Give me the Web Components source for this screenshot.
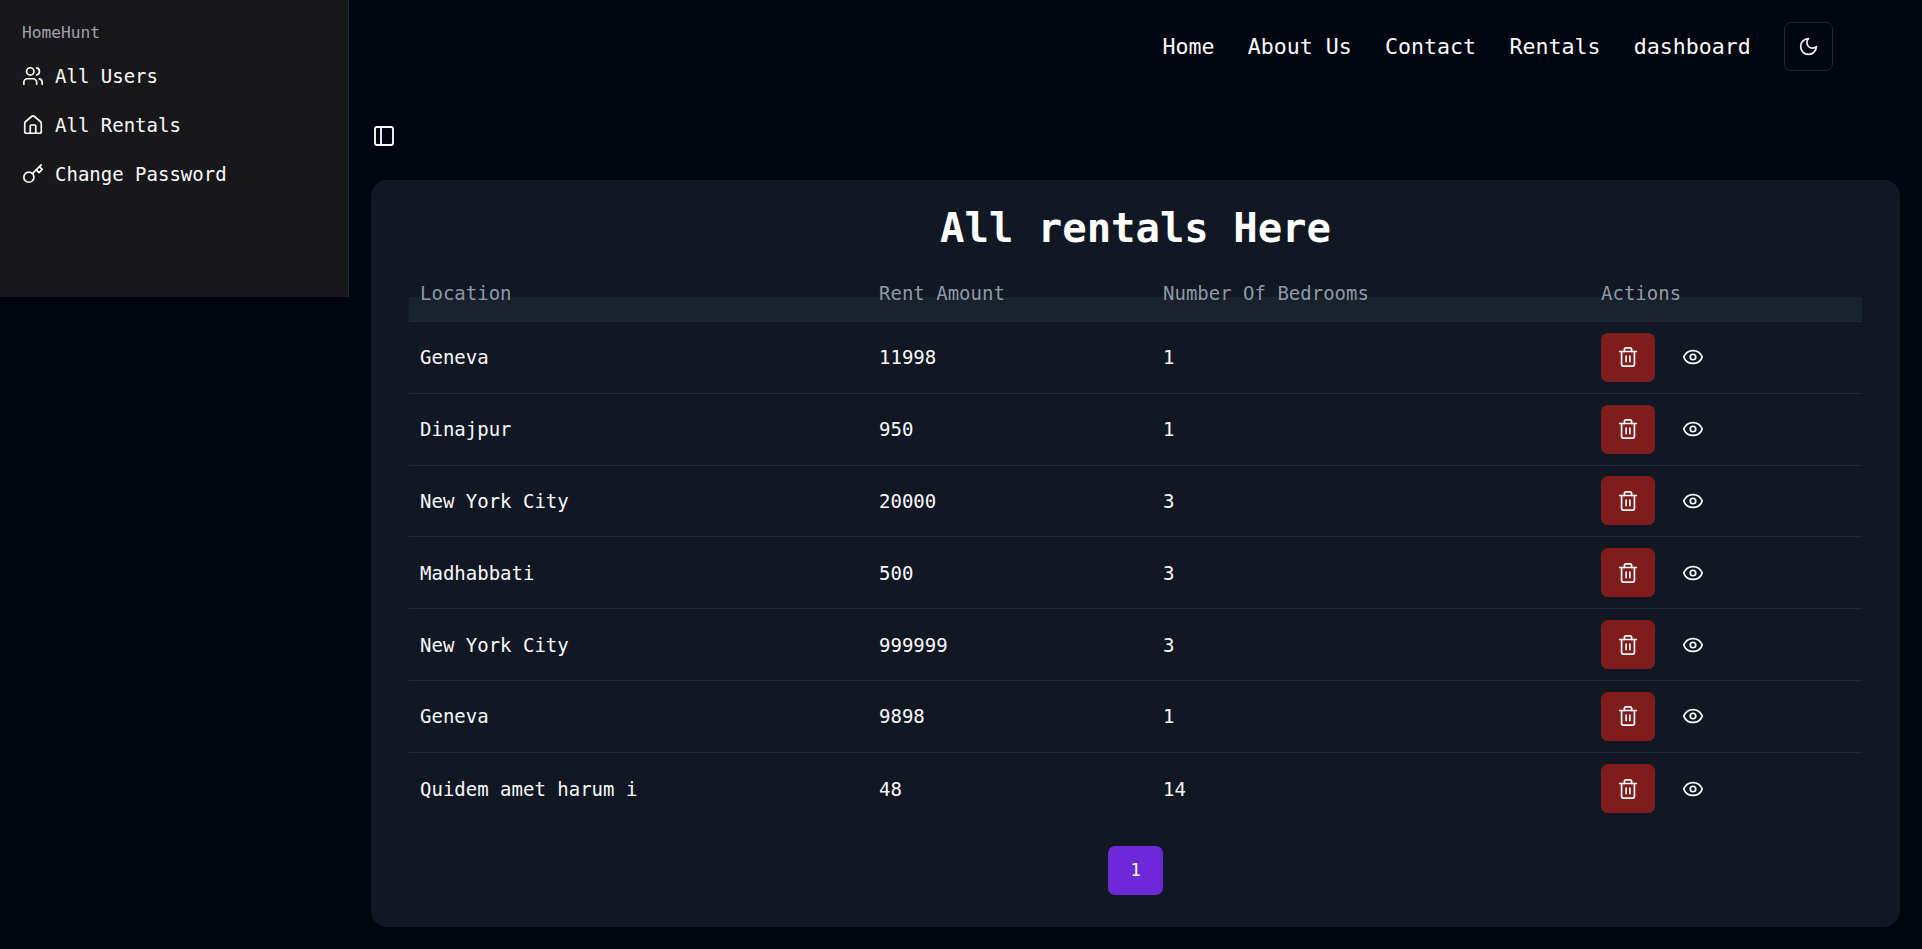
<!DOCTYPE html>
<html>
<head>
<meta charset="utf-8">
<title>HomeHunt</title>
<style>
    html, body { margin: 0; height: 100%; background: #01050f; overflow: hidden; }
    body { font-family: "DejaVu Sans Mono", monospace; color: #f9fafb; }
</style>
</head>
<body>
<app-shell>
    <side-bar slot="side"></side-bar>
    <top-nav slot="nav"></top-nav>
    <rentals-card slot="main"></rentals-card>
</app-shell>

<script>
const icons = {
    users: '<path d="M16 21v-2a4 4 0 0 0-4-4H6a4 4 0 0 0-4 4v2"/><circle cx="9" cy="7" r="4"/><path d="M22 21v-2a4 4 0 0 0-3-3.87"/><path d="M16 3.13a4 4 0 0 1 0 7.75"/>',
    home: '<path d="M15 21v-8a1 1 0 0 0-1-1h-4a1 1 0 0 0-1 1v8"/><path d="M3 10a2 2 0 0 1 .709-1.528l7-5.999a2 2 0 0 1 2.582 0l7 5.999A2 2 0 0 1 21 10v9a2 2 0 0 1-2 2H5a2 2 0 0 1-2-2z"/>',
    key: '<circle cx="7.5" cy="15.5" r="5.5"/><path d="m21 2-9.6 9.6"/><path d="m15.5 7.5 3 3L22 7l-3-3"/>',
    panel: '<rect width="18" height="18" x="3" y="3" rx="2"/><path d="M9 3v18"/>',
    moon: '<path d="M12 3a6 6 0 0 0 9 9 9 9 0 1 1-9-9Z"/>',
    trash: '<path d="M3 6h18"/><path d="M19 6v14a2 2 0 0 1-2 2H7a2 2 0 0 1-2-2V6"/><path d="M8 6V4a2 2 0 0 1 2-2h4a2 2 0 0 1 2 2v2"/><path d="M10 11v6"/><path d="M14 11v6"/>',
    eye: '<path d="M2.062 12.348a1 1 0 0 1 0-.696 10.75 10.75 0 0 1 19.876 0 1 1 0 0 1 0 .696 10.75 10.75 0 0 1-19.876 0"/><circle cx="12" cy="12" r="3"/>'
};

function icon(name, size) {
    return `<svg width="${size}" height="${size}" viewBox="0 0 24 24" fill="none" stroke="currentColor" stroke-width="1.85" stroke-linecap="round" stroke-linejoin="round">${icons[name]}</svg>`;
}

class AppShell extends HTMLElement {
    constructor() {
        super();
        this.shadowDOM = this.attachShadow({mode: "open"});
        this.shadowDOM.innerHTML = `
        <style>
            :host {
                display: grid;
                grid-template-columns: 349px 1fr;
                height: 949px;
                align-items: start;
            }
            .content {
                display: flex;
                flex-direction: column;
                padding: 0 22px 0 22px;
            }
        </style>
        <slot name="side"></slot>
        <div class="content">
            <slot name="nav"></slot>
            <slot name="main"></slot>
        </div>
        `;
    }
}

class SideBar extends HTMLElement {
    constructor() {
        super();
        this.shadowDOM = this.attachShadow({mode: "open"});
        const items = [["users", "All Users"], ["home", "All Rentals"], ["key", "Change Password"]];
        this.shadowDOM.innerHTML = `
        <style>
            * { box-sizing: border-box; }
            :host {
                display: block;
                box-sizing: border-box;
                height: 297px;
                background: #18181a;
                border-right: 1px solid #1f2937;
                padding: 22px 22px 0;
            }
            .brand {
                font-size: 16.2px;
                line-height: 22px;
                color: #a1a1aa;
                margin-bottom: 7px;
            }
            .item {
                display: flex;
                align-items: center;
                gap: 11px;
                height: 49px;
                font-size: 19px;
                color: #fafafa;
            }
            svg { display: block; flex: none; }
        </style>
        <div class="brand">HomeHunt</div>
        ${items.map(i => `<div class="item">${icon(i[0], 22)}<span>${i[1]}</span></div>`).join("")}
        `;
    }
}

class TopNav extends HTMLElement {
    constructor() {
        super();
        this.shadowDOM = this.attachShadow({mode: "open"});
        const links = ["Home", "About Us", "Contact", "Rentals", "dashboard"];
        this.shadowDOM.innerHTML = `
        <style>
            * { box-sizing: border-box; }
            :host { display: block; box-sizing: border-box; height: 180px; }
            .bar {
                display: flex;
                justify-content: flex-end;
                align-items: center;
                gap: 33.3px;
                height: 49px;
                margin-top: 22px;
                padding-right: 67px;
                font-size: 21.6px;
            }
            .toggle {
                width: 49px;
                height: 49px;
                display: flex;
                align-items: center;
                justify-content: center;
                border: 1px solid #1f2937;
                border-radius: 7px;
            }
            .panel {
                color: #f9fafb;
                margin: 53px 0 0 1px;
                width: 24px;
            }
            svg { display: block; }
        </style>
        <div class="bar">
            ${links.map(l => `<span>${l}</span>`).join("")}
            <div class="toggle">${icon("moon", 21)}</div>
        </div>
        <div class="panel">${icon("panel", 24)}</div>
        `;
    }
}

class RentalRow extends HTMLElement {
    constructor() {
        super();
        this.shadowDOM = this.attachShadow({mode: "open"});
        this.shadowDOM.innerHTML = `
        <style>
            * { box-sizing: border-box; }
            :host {
                display: grid;
                box-sizing: border-box;
                grid-template-columns: 459px 284px 438px 1fr;
                align-items: center;
                height: 71.8px;
                padding-left: 11px;
                border-bottom: 1px solid #1f2937;
                font-size: 19px;
            }
            :host(:last-child) { border-bottom: 0; }
            .actions { display: flex; align-items: center; }
            .del {
                width: 54px;
                height: 49px;
                display: flex;
                align-items: center;
                justify-content: center;
                background: #7f1d1d;
                border-radius: 7px;
            }
            .view {
                width: 22px;
                margin-left: 27px;
            }
            svg { display: block; }
        </style>
        <span>${this.getAttribute("location")}</span>
        <span>${this.getAttribute("rent")}</span>
        <span>${this.getAttribute("beds")}</span>
        <div class="actions">
            <div class="del">${icon("trash", 22)}</div>
            <div class="view">${icon("eye", 22)}</div>
        </div>
        `;
    }
}

class RentalsCard extends HTMLElement {
    constructor() {
        super();
        this.shadowDOM = this.attachShadow({mode: "open"});
        const rentals = [
            ["Geneva", "11998", "1"],
            ["Dinajpur", "950", "1"],
            ["New York City", "20000", "3"],
            ["Madhabbati", "500", "3"],
            ["New York City", "999999", "3"],
            ["Geneva", "9898", "1"],
            ["Quidem amet harum i", "48", "14"]
        ];
        this.shadowDOM.innerHTML = `
        <style>
            * { box-sizing: border-box; }
            :host {
                display: block;
                box-sizing: border-box;
                height: 747px;
                background: #111824;
                border-radius: 16px;
                padding: 25px 38px 0;
            }
            h1 {
                margin: 0;
                font-size: 40.6px;
                line-height: 46px;
                font-weight: 700;
                text-align: center;
                color: #fff;
            }
            .head {
                display: grid;
                grid-template-columns: 459px 284px 438px 1fr;
                height: 52px;
                margin-top: 19px;
                padding: 10px 0 0 11px;
                font-size: 19px;
                line-height: 26px;
                color: #8e98a7;
                border-bottom: 1px solid #1f2937;
                background: linear-gradient(transparent 27px, #18232e 27px);
            }
            .pager {
                display: flex;
                justify-content: center;
                margin-top: 21px;
            }
            .pager span {
                width: 55px;
                height: 49px;
                display: flex;
                align-items: center;
                justify-content: center;
                background: #6d28d9;
                border-radius: 7px;
                font-size: 17px;
                color: #fff;
            }
        </style>
        <h1>All rentals Here</h1>
        <div class="head">
            <span>Location</span><span>Rent Amount</span><span>Number Of Bedrooms</span><span>Actions</span>
        </div>
        <div class="rows">
            ${rentals.map(r => `<rental-row location="${r[0]}" rent="${r[1]}" beds="${r[2]}"></rental-row>`).join("")}
        </div>
        <div class="pager"><span>1</span></div>
        `;
    }
}

customElements.define("rental-row", RentalRow);
customElements.define("app-shell", AppShell);
customElements.define("side-bar", SideBar);
customElements.define("top-nav", TopNav);
customElements.define("rentals-card", RentalsCard);
</script>
</body>
</html>
